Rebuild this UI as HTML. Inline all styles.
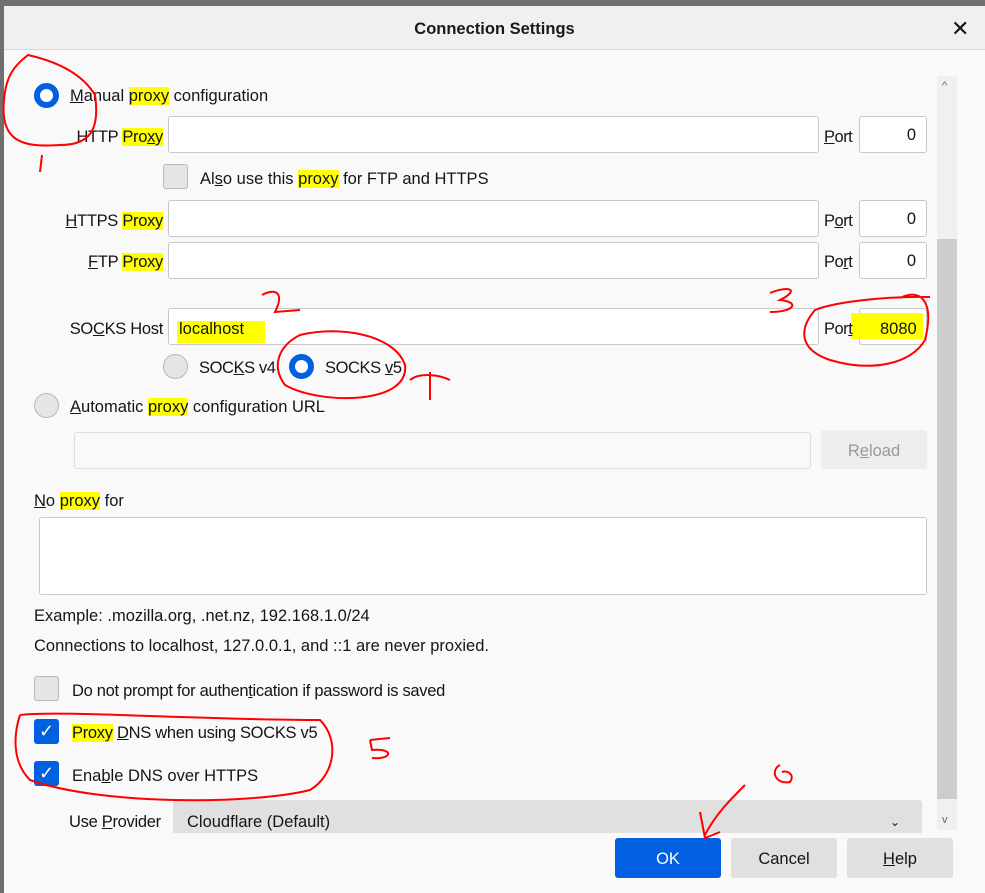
<!DOCTYPE html>
<html><head><meta charset="utf-8"><style>
*{box-sizing:border-box;margin:0;padding:0}
body{width:985px;height:893px;background:#6f6f6f;position:relative;overflow:hidden;font-family:"Liberation Sans",sans-serif;font-size:16.5px;color:#15141a}
.dlg{position:absolute;left:4px;top:6px;width:981px;height:887px;background:#f9f9fa}
.title{position:absolute;left:4px;top:6px;width:981px;height:44px;background:#f0f0f0;border-bottom:1px solid #d8d8d8;text-align:center;line-height:46px;font-size:16.5px;font-weight:bold;color:#1a1a1a}
.a{position:absolute;white-space:nowrap}
.lb{position:absolute;white-space:nowrap;right:822px;letter-spacing:-0.3px}
.pt{position:absolute;white-space:nowrap;left:824px;letter-spacing:-0.5px}
.in{position:absolute;background:#fff;border:1px solid #c8c8c8;border-radius:3px;height:37px}
.port{text-align:right;padding-right:10px;line-height:37px}
.hl{background:#ffff00}
u{text-decoration:underline}
.rad{position:absolute;width:25px;height:25px;border-radius:50%;background:#e5e5e5;border:1px solid #b8b8b8}
.rad.on{background:#fff;border:6px solid #0060df}
.cb{position:absolute;width:25px;height:25px;border-radius:3px;background:#e5e5e5;border:1px solid #b8b8b8}
.cb.on{background:#0060df;border:none;color:#fff;text-align:center;line-height:25px;font-size:18px}
.btn{position:absolute;height:40px;top:838px;background:#e0e0e0;border-radius:3px;text-align:center;line-height:42px;font-size:16.5px}
</style></head><body>
<div class="dlg"></div>
<div class="title">Connection Settings</div>
<div class="a" style="left:951px;top:16px;font-size:22px">✕</div>
<div class="a" style="left:937px;top:76px;width:20px;height:754px;background:#f0f0f0"></div>
<div class="a" style="left:937px;top:239px;width:20px;height:560px;background:#cdcdcd"></div>
<div class="a" style="left:942px;top:80px;font-size:11px;color:#666">^</div>
<div class="a" style="left:942px;top:814px;font-size:11px;color:#666">v</div>

<div class="rad on" style="left:34px;top:83px"></div>
<div class="a" style="left:70px;top:87px"><u>M</u>anual <span class="hl">proxy</span> configuration</div>
<div class="lb" style="top:128px">HTTP <span class="hl">Pro<u>x</u>y</span></div>
<div class="in" style="left:168px;top:116px;width:651px"></div>
<div class="pt" style="top:128px"><u>P</u>ort</div>
<div class="in port" style="left:859px;top:116px;width:68px">0</div>
<div class="cb" style="left:163px;top:164px"></div>
<div class="a" style="left:200px;top:170px">Al<u>s</u>o use this <span class="hl">proxy</span> for FTP and HTTPS</div>
<div class="lb" style="top:212px"><u>H</u>TTPS <span class="hl">Proxy</span></div>
<div class="in" style="left:168px;top:200px;width:651px"></div>
<div class="pt" style="top:212px">P<u>o</u>rt</div>
<div class="in port" style="left:859px;top:200px;width:68px">0</div>
<div class="lb" style="top:253px"><u>F</u>TP <span class="hl">Proxy</span></div>
<div class="in" style="left:168px;top:242px;width:651px"></div>
<div class="pt" style="top:253px">Po<u>r</u>t</div>
<div class="in port" style="left:859px;top:242px;width:68px">0</div>
<div class="lb" style="top:320px">SO<u>C</u>KS Host</div>
<div class="in" style="left:168px;top:308px;width:651px"></div>
<div class="a hl" style="left:177px;top:321px;width:88px;height:22px"></div>
<div class="a" style="left:179px;top:320px">localhost</div>
<div class="in port" style="left:859px;top:308px;width:68px"></div>
<div class="a hl" style="left:851px;top:313px;width:72px;height:26px"></div>
<div class="pt" style="top:320px">Por<u>t</u></div>
<div class="a" style="left:880px;top:320px">8080</div>
<div class="rad" style="left:163px;top:354px"></div>
<div class="a" style="left:199px;top:359px;letter-spacing:-0.4px">SOC<u>K</u>S v4</div>
<div class="rad on" style="left:289px;top:354px"></div>
<div class="a" style="left:325px;top:359px;letter-spacing:-0.4px">SOCKS <u>v</u>5</div>
<div class="rad" style="left:34px;top:393px"></div>
<div class="a" style="left:70px;top:398px"><u>A</u>utomatic <span class="hl">proxy</span> configuration URL</div>
<div class="in" style="left:74px;top:432px;width:737px;background:#f9f9fa;border-color:#ddd"></div>
<div class="a" style="left:821px;top:430px;width:106px;height:39px;background:#ededed;border-radius:3px;text-align:center;line-height:42px;color:#999">R<u>e</u>load</div>
<div class="a" style="left:34px;top:492px"><u>N</u>o <span class="hl">proxy</span> for</div>
<div class="in" style="left:39px;top:517px;width:888px;height:78px"></div>
<div class="a" style="left:34px;top:607px">Example: .mozilla.org, .net.nz, 192.168.1.0/24</div>
<div class="a" style="left:34px;top:637px">Connections to localhost, 127.0.0.1, and ::1 are never proxied.</div>
<div class="cb" style="left:34px;top:676px"></div>
<div class="a" style="left:72px;top:682px;letter-spacing:-0.3px">Do not prompt for authen<u>t</u>ication if password is saved</div>
<div class="cb on" style="left:34px;top:719px">✓</div>
<div class="a" style="left:72px;top:724px;letter-spacing:-0.3px"><span class="hl">Proxy</span> <u>D</u>NS when using SOCKS v5</div>
<div class="cb on" style="left:34px;top:761px">✓</div>
<div class="a" style="left:72px;top:767px">Ena<u>b</u>le DNS over HTTPS</div>
<div class="a" style="left:69px;top:813px;letter-spacing:-0.3px">Use <u>P</u>rovider</div>
<div class="a" style="left:173px;top:800px;width:749px;height:33px;background:#e0e0e0;border-radius:3px 3px 0 0;padding-left:14px;line-height:44px">Cloudflare (Default)<span style="position:absolute;right:22px;font-size:12px">⌄</span></div>
<div class="btn" style="left:615px;width:106px;background:#0060df;color:#fff">OK</div>
<div class="btn" style="left:731px;width:106px">Cancel</div>
<div class="btn" style="left:847px;width:106px"><u>H</u>elp</div>
<svg class="a" style="left:0;top:0" width="985" height="893" fill="none" stroke="#f00" stroke-width="2">
<path d="M28 55 C50 60 80 70 95 95 C100 130 90 145 60 145 C20 148 0 140 4 100 C6 75 15 65 28 55 Z"/>
<path d="M42 155 L40 172"/>
<path d="M262 295 C275 288 285 292 275 312 L300 310"/>
<path d="M770 293 C790 285 800 290 780 300 C800 302 795 312 770 312"/>
<path d="M900 298 C920 288 935 300 925 340 C910 365 870 372 830 360 C800 350 798 330 815 310 C840 300 900 296 930 297"/>
<path d="M300 335 C340 325 395 335 405 365 C410 405 320 405 285 385 C270 365 280 345 300 335"/>
<path d="M410 380 C420 372 440 375 450 380 M430 372 L430 400"/>
<path d="M20 715 C60 710 200 720 320 720 C340 740 335 775 310 790 C250 805 100 805 30 780 C10 760 15 730 20 715"/>
<path d="M370 740 L390 738 M370 740 L372 750 C395 748 392 760 372 758"/>
<path d="M780 765 C770 770 775 785 790 782 C795 775 788 770 782 772"/>
<path d="M745 785 C730 800 715 815 705 835 M700 812 L705 838 L720 832"/>
</svg>
</body></html>
